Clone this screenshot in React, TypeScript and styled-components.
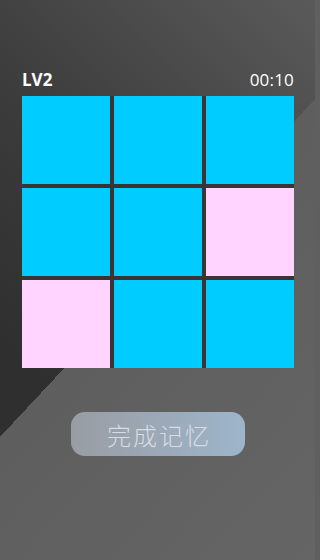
import styled, { createGlobalStyle } from 'styled-components';

type TileColor = 'blue' | 'pink';

const tiles: TileColor[] = [
  'blue', 'blue', 'blue',
  'blue', 'blue', 'pink',
  'pink', 'blue', 'blue',
];

const GlobalStyle = createGlobalStyle`
  html, body {
    margin: 0;
    padding: 0;
    background: #5f5f5f;
  }
  * {
    box-sizing: border-box;
  }
`;

const App = () => {
  return (
    <>
      <GlobalStyle />
      <Screen>
        <Header>
          <Level>LV2</Level>
          <Timer>00:10</Timer>
        </Header>
        <Board>
          {tiles.map((color, i) => (
            <Tile key={i} color={color} />
          ))}
        </Board>
        <DoneButton>完成记忆</DoneButton>
      </Screen>
    </>
  );
};

const Screen = styled.div`
  width: 315px;
  height: 560px;
  display: flex;
  flex-direction: column;
  align-items: center;
  padding: 69px 21px 0 22px;
  font-family: 'Open Sans', 'Noto Sans', 'Noto Sans CJK SC', sans-serif;
  background:
    linear-gradient(133deg, transparent 298px, #5e5e5e 298px, #656565 100%),
    linear-gradient(225deg, #5a5a5a 0%, #3c3c3c 45%, #2f2f2f 75%);
`;

const Header = styled.div`
  width: 100%;
  display: flex;
  justify-content: space-between;
  align-items: center;
  height: 22px;
  margin-bottom: 5px;
  color: #ffffff;
  font-size: 17px;
  line-height: 22px;
`;

const Level = styled.span`
  font-weight: 700;
`;

const Timer = styled.span`
  font-weight: 400;
  letter-spacing: 0.2px;
`;

const Board = styled.div`
  display: grid;
  grid-template-columns: repeat(3, 88px);
  grid-auto-rows: 88px;
  gap: 4px;
  background: #3a3434;
`;

const Tile = styled.div<{ color: TileColor }>`
  background: ${({ color }) => (color === 'blue' ? '#00ccff' : '#ffd4fe')};
`;

const DoneButton = styled.button`
  margin-top: 44px;
  width: 174px;
  height: 44px;
  border: none;
  border-radius: 14px;
  background: linear-gradient(90deg, #999da3 0%, #9caab8 55%, #9db5cb 100%);
  color: #d6dde4;
  font-family: 'Noto Sans CJK SC', sans-serif;
  font-weight: 300;
  font-size: 24px;
  letter-spacing: 2px;
  padding: 0 0 0 2px;
  cursor: pointer;
`;

export default App;
